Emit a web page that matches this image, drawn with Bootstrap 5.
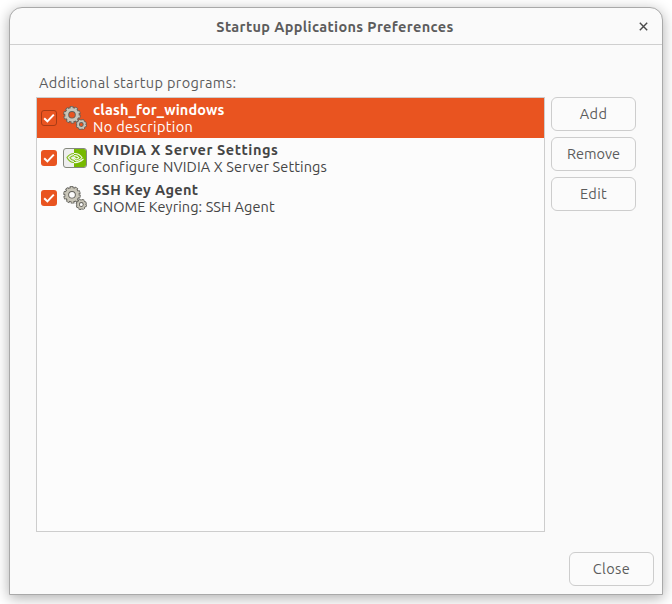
<!DOCTYPE html>
<html lang="en">
<head>
<meta charset="utf-8">
<meta name="viewport" content="width=device-width, initial-scale=1">
<title>Startup Applications Preferences</title>
<link href="https://cdn.jsdelivr.net/npm/bootstrap@5.3.0/dist/css/bootstrap.min.css" rel="stylesheet">
<style>
body{background:#fff;font:14.5px/17px "Ubuntu","Noto Sans",sans-serif;color:#5c5c5c;height:604px;overflow:hidden;padding:7px 9px 9px}
.dialog{width:654px;height:588px;background:#fafafa;border:1px solid #a9a9a9;border-radius:13px 13px 0 0;box-shadow:0 3px 14px rgba(0,0,0,.32)}
.titlebar{height:37px;border-bottom:1px solid #cfcfcf;padding-left:34px}
.close-x{width:36px;height:36px;padding-right:2px;color:#4a4a4a}
.content{padding:29px 26px 0}
.caption-text{padding-left:3px;height:23px}
.programs{width:509px;height:435px;background:#fcfcfc;border:1px solid #cdcdcd;color:#454545}
.program{height:40px;padding-left:4px}
.program.selected{background:#e95420;color:#fff}
.tick{width:16px;height:16px;margin-right:6px}
.app-icon{width:24px;height:24px;margin-right:6px}
.actions{width:85px;margin-left:6px;gap:6px}
.btn-plain{--bs-btn-color:#5c5c5c;--bs-btn-border-color:#cdcdcd;--bs-btn-bg:#fbfbfb;--bs-btn-border-radius:6px;--bs-btn-font-size:14.5px;--bs-btn-padding-x:0;--bs-btn-padding-y:0;width:85px;height:34px;line-height:32px}
.footer-row{padding:20px 8px 0 0}
.track-1{letter-spacing:.08px}
.track-2{letter-spacing:.13px}
.track-3{letter-spacing:.36px}
.track-4{letter-spacing:.55px}
</style>
</head>
<body>
<main class="dialog">
  <header class="titlebar d-flex align-items-center">
    <div class="flex-grow-1 text-center fw-bold track-3">Startup Applications Preferences</div>
    <div class="close-x d-flex align-items-center justify-content-center"><svg width="9" height="9" viewBox="0 0 9 9" fill="none" stroke="currentColor" stroke-width="1.4"><path d="M.8.8 8.2 8.2M8.2.8.8 8.2"/></svg></div>
  </header>
  <section class="content">
    <div class="caption-text track-3">Additional startup programs:</div>
    <div class="d-flex">
      <div class="programs">
        <div class="program selected d-flex align-items-center">
          <svg class="tick" viewBox="0 0 16 16"><rect x=".5" y=".5" width="15" height="15" rx="2.5" fill="#e95420" stroke="#a83c16"/><path d="m3.200 8.200 3.200 3.200 6.400-6.800" fill="none" stroke="#fff" stroke-width="2"/></svg>
          <svg class="app-icon" viewBox="0 0 24 24"><use href="#gears"/></svg>
          <div><div class="fw-bold track-2">clash_for_windows</div><div class="track-3">No description</div></div>
        </div>
        <div class="program d-flex align-items-center">
          <svg class="tick" viewBox="0 0 16 16"><rect width="16" height="16" rx="3" fill="#e95420"/><path d="m3.200 8.200 3.200 3.200 6.400-6.800" fill="none" stroke="#fff" stroke-width="2"/></svg>
          <svg class="app-icon" viewBox="0 0 24 24">
            <rect x=".5" y="2.500" width="23" height="19" rx="2.500" fill="#eee"/><path d="M11 3h10q2 0 2 2v14q0 2-2 2H11z" fill="#76b900"/>
            <rect x=".5" y="2.500" width="23" height="19" rx="2.500" fill="none" stroke="#85897e"/>
            <path d="M11 7.500C7.500 7.700 5 10 4 11.500c1.500 3 4 5 7 5M11 9.700c-2 .2-3.200 1.200-4 2 1 1.700 2.400 2.600 4 2.700" fill="none" stroke="#84c11c" stroke-width="1.200"/>
            <path d="M11 7.500c4-.3 6.500 1.700 8 4-1.500 2-4 3.300-5.500 3.200-1.500 0-2.500-1.500-3-3M11 9.700c2.500-.4 4 .6 5 2-1 1-2 1.500-3 1-1-.4-1-1.200-2-1.600M11 16.500c4 .5 7-1.300 9.500-3.500" fill="none" stroke="#f4faea" stroke-width="1.100"/>
          </svg>
          <div><div class="fw-bold track-4">NVIDIA X Server Settings</div><div class="track-2">Configure NVIDIA X Server Settings</div></div>
        </div>
        <div class="program d-flex align-items-center">
          <svg class="tick" viewBox="0 0 16 16"><rect width="16" height="16" rx="3" fill="#e95420"/><path d="m3.200 8.200 3.200 3.200 6.400-6.800" fill="none" stroke="#fff" stroke-width="2"/></svg>
          <svg class="app-icon" viewBox="0 0 24 24">
            <defs><g id="gears" fill="none">
              <circle cx="9" cy="8.800" r="7.300" stroke="#62615b" stroke-width="3" stroke-dasharray="3.300 1.287"/>
              <circle cx="9" cy="8.800" r="5.300" stroke="#62615b" stroke-width="4.800"/>
              <circle cx="9" cy="8.800" r="7" stroke="#c9c6b9" stroke-width="2" stroke-dasharray="1.900 2.498" stroke-dashoffset="-.7"/>
              <circle cx="9" cy="8.800" r="5.300" stroke="#c9c6b9" stroke-width="3"/>
              <circle cx="18.300" cy="18.500" r="4.600" stroke="#62615b" stroke-width="2" stroke-dasharray="2.300 1.313"/>
              <circle cx="18.300" cy="18.500" r="3.300" stroke="#62615b" stroke-width="3.600"/>
              <circle cx="18.300" cy="18.500" r="4.300" stroke="#c9c6b9" stroke-width="1.100" stroke-dasharray="1.300 2.077" stroke-dashoffset="-.5"/>
              <circle cx="18.300" cy="18.500" r="3.300" stroke="#c9c6b9" stroke-width="1.800"/>
            </g></defs>
            <use href="#gears"/>
          </svg>
          <div><div class="fw-bold track-3">SSH Key Agent</div><div class="track-1">GNOME Keyring: SSH Agent</div></div>
        </div>
      </div>
      <div class="actions d-flex flex-column">
        <button class="btn btn-plain track-3">Add</button>
        <button class="btn btn-plain">Remove</button>
        <button class="btn btn-plain track-3">Edit</button>
      </div>
    </div>
  </section>
  <footer class="footer-row d-flex justify-content-end">
    <button class="btn btn-plain track-3">Close</button>
  </footer>
</main>
<script src="https://cdn.jsdelivr.net/npm/bootstrap@5.3.0/dist/js/bootstrap.bundle.min.js"></script>
</body>
</html>
